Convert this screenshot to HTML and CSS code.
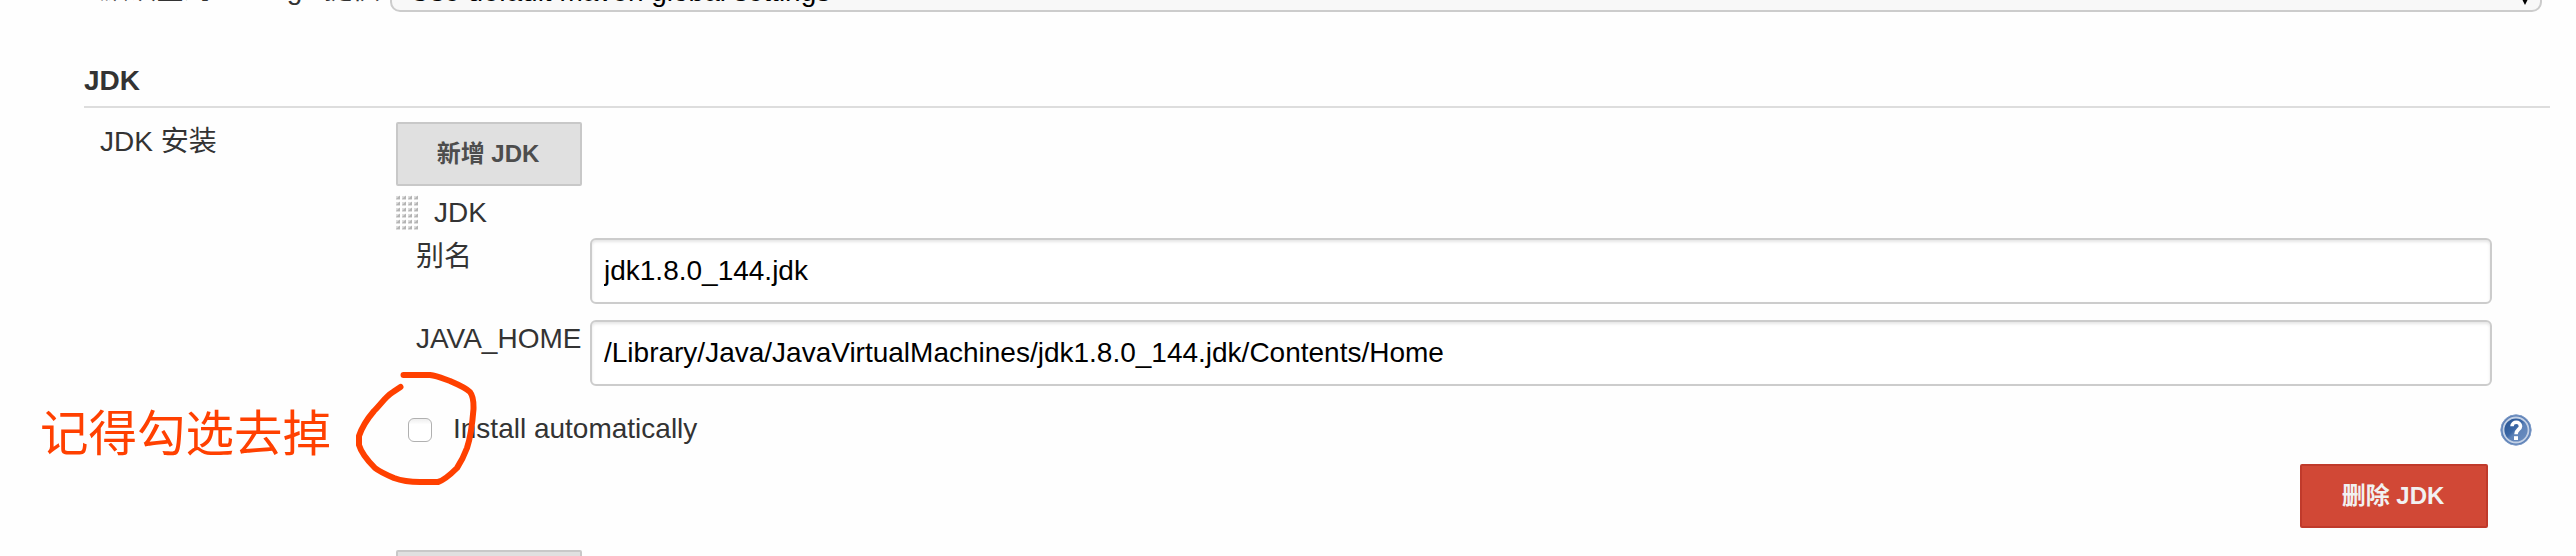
FILE: index.html
```
<!DOCTYPE html>
<html lang="zh-CN">
<head>
<meta charset="utf-8">
<title>JDK</title>
<link rel="stylesheet" href="styles.css">
</head>
<body>
<main class="page">
  <div class="maven-row">
    <div class="maven-label">默认全局 settings 提供</div>
    <div class="select"><span>Use default maven global settings</span>
      <svg class="select-arrow" width="10" height="24" viewBox="0 0 10 24"><path d="M0 9 5 0 10 9ZM0 14H10L5 24Z"/></svg>
    </div>
  </div>
  <h2 class="section-title">JDK</h2>
  <div class="section">
    <div class="section-label">JDK 安装</div>
    <div class="section-body">
      <button class="btn">新增 JDK</button>
      <div class="chunk-head">
        <svg class="grip" width="22" height="36" viewBox="0 0 22 36">
          <defs><pattern id="dots" width="6" height="6" patternUnits="userSpaceOnUse"><path d="M0 2H4V6H0Z" fill="#ddd"/><path d="M0 5 4 1.500V5Z" fill="#b4b4b4"/></pattern></defs>
          <rect width="22" height="36" fill="url(#dots)"/>
        </svg>
        <span>JDK</span>
      </div>
      <div class="field"><label for="name">别名</label><input id="name" type="text" value="jdk1.8.0_144.jdk"></div>
      <div class="field"><label for="home">JAVA_HOME</label><input id="home" type="text" value="/Library/Java/JavaVirtualMachines/jdk1.8.0_144.jdk/Contents/Home"></div>
      <div class="auto-row">
        <span class="checkbox"></span>
        <span class="auto-text">Install automatically</span>
        <svg class="help" width="32" height="32" viewBox="0 0 32 32">
          <defs><linearGradient id="blue" x1="0" y1="0" x2="1" y2="1"><stop offset="0" stop-color="#214f8f"/><stop offset=".45" stop-color="#3c68a6"/><stop offset=".55" stop-color="#5e83b8"/><stop offset="1" stop-color="#6b8fc2"/></linearGradient></defs>
          <circle cx="16" cy="16" r="15.2" fill="#5b7fb5" stroke="#7d9bc8"/>
          <circle cx="16" cy="16" r="12.5" fill="url(#blue)" stroke="#c3d1e6" stroke-width="1.8"/>
          <path d="M12 12.2C12 7 20.500 7 20.500 12.2C20.500 15.500 16 15.500 16 20.2" fill="none" stroke="#fff" stroke-width="3.6"/>
          <rect x="14" y="22.2" width="4" height="3.8" fill="#fff"/>
        </svg>
      </div>
      <button class="btn btn-danger">删除 JDK</button>
      <button class="btn btn-next" aria-label="新增"></button>
    </div>
  </div>
  <div class="note">记得勾选去掉</div>
  <svg class="circle" width="130" height="124" viewBox="350 368 130 124"><path d="M403.500 375H430C438 376 444 379 450 381C457 384 466 388 470 392C474 397 473.500 403 473.500 409C472.500 422 471 436 467 448C464 456 461 462 457 468C451 474 445 480 438 482H420C409 482 402 481 394 478C387 475 380 472 375 468C369 462 361 452 359 445V436C362 427 368 418 374 411C382 403 385 397 393 392L400.500 387"/></svg>
</main>
</body>
</html>
```
FILE: styles.css
```
* { box-sizing: border-box; }
body {
  margin: 0;
  background: #fefefe;
  color: #333;
  font: 28px/32px "Liberation Sans", "Noto Sans CJK SC", sans-serif;
}
.page { position: relative; height: 556px; overflow: hidden; }
.maven-row {
  display: flex;
  align-items: flex-end;
  height: 12px;
  padding-left: 100px;
}
.maven-label { width: 290px; padding-bottom: 6px; white-space: nowrap; flex: none; }
.select {
  display: flex;
  align-items: center;
  justify-content: space-between;
  width: 2152px;
  height: 56px;
  padding: 16px 10px 0 18px;
  border: 2px solid #ccc;
  border-radius: 10px;
  background: #f8f8f8;
  color: #000;
  flex: none;
}
.select-arrow { margin-top: 2px; }
.section-title {
  height: 44px;
  margin: 52px 26px 0 84px;
  padding-top: 1px;
  border-bottom: 2px solid #ddd;
  font-size: 28px;
  line-height: 32px;
}
.section { display: flex; padding: 14px 44px 0 100px; }
.section-label { width: 296px; padding-top: 4px; flex: none; }
.section-body { display: flex; flex-direction: column; flex: 1; }
.btn {
  width: 186px;
  height: 64px;
  padding: 0 2px 0 0;
  border: 2px solid #c8c8c8;
  border-radius: 2px;
  background: #e0e0e0;
  color: #4d4d4d;
  font: bold 24px/30px "Liberation Sans", "Noto Sans CJK SC", sans-serif;
  flex: none;
}
.chunk-head { display: flex; gap: 16px; height: 52px; padding-top: 8px; line-height: 37px; }
.field {
  display: grid;
  grid-template-columns: 174px 1902px;
  height: 82px;
  padding-left: 20px;
}
.field label { padding-top: 3px; }
.field input {
  height: 66px;
  padding: 0 12px;
  border: 2px solid #ccc;
  border-radius: 6px;
  background: #fff;
  box-shadow: inset 0 2px 3px rgba(0, 0, 0, .1);
  color: #000;
  font: inherit;
}
.auto-row { display: flex; align-items: center; height: 56px; padding-left: 12px; }
.checkbox {
  width: 24px;
  height: 24px;
  border: 1.5px solid #b0b0b0;
  border-radius: 6px;
  background: linear-gradient(#eee, #fff 25%);
}
.auto-text { margin-left: 21px; padding-bottom: 2px; }
.help { margin-left: auto; }
.btn-danger {
  align-self: flex-end;
  width: 188px;
  margin: 6px 44px 0 0;
  border-color: #c03a2b;
  background: #d14836;
  color: #f1f1f1;
}
.btn-next { margin-top: 22px; }
.note {
  position: absolute;
  left: 40px;
  top: 398px;
  color: #ff4000;
  font: 48.5px/64px "Noto Sans CJK SC", sans-serif;
}
.circle {
  position: absolute;
  left: 350px;
  top: 368px;
  fill: none;
  stroke: #ff4000;
  stroke-width: 6;
  stroke-linecap: round;
  stroke-linejoin: round;
}
```
